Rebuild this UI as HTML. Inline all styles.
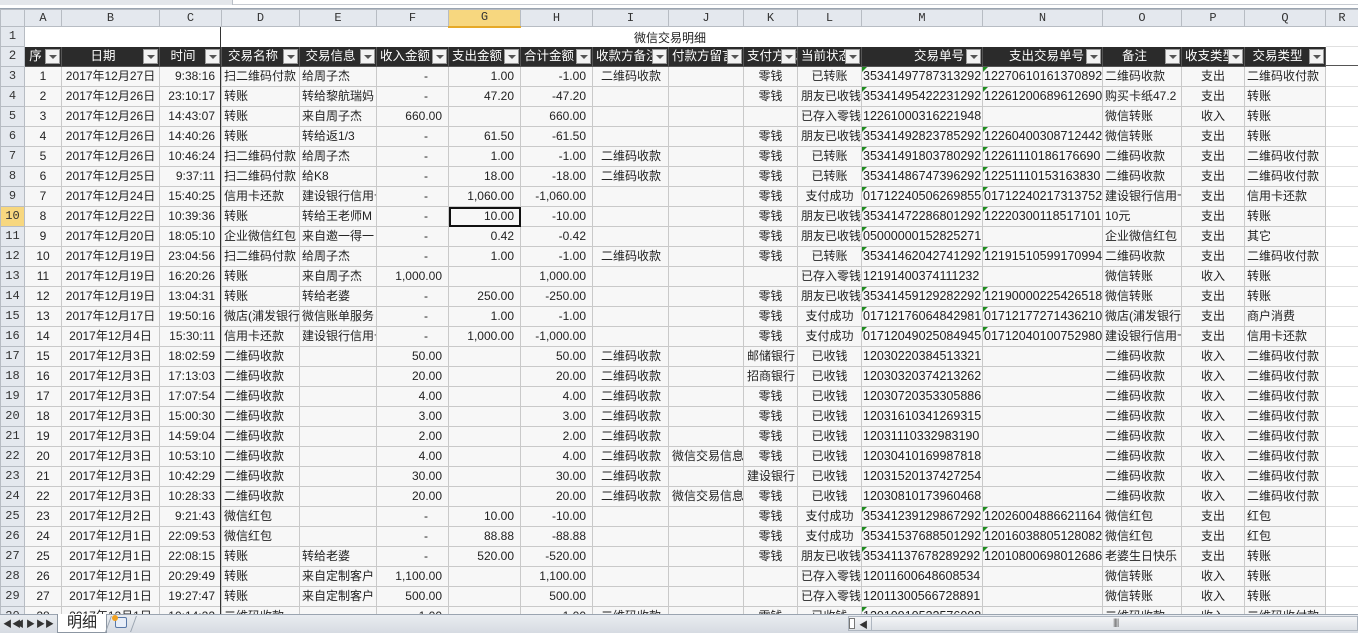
<!DOCTYPE html>
<html><head><meta charset="utf-8">
<style>
*{margin:0;padding:0;box-sizing:border-box}
html{overflow:hidden;height:633px}
body{width:1358px;height:633px;overflow:hidden;background:#fff;position:relative;font-family:"Liberation Sans","Noto Sans CJK SC",sans-serif;font-size:12px;color:#222}
#top{position:absolute;left:0;top:0;width:1358px;height:9px;background:#fff;border-bottom:1px solid #9aa4b0}
#top:before{content:"";position:absolute;left:0;top:4px;width:1358px;height:1px;background:#c8ccd2}
#top:after{content:"";position:absolute;left:0;top:0;width:232px;height:5px;background:#e4e7eb;border-right:1px solid #b8bec6}
table{position:absolute;left:0;top:9px;border-collapse:collapse;table-layout:fixed;width:1358px}
td{height:19px;border:1px solid #c9c9c9;background:#f7f7f7;white-space:nowrap;overflow:hidden;padding:0 3px;line-height:17px;position:relative}
tr.ch td{height:17px;line-height:15px;background:#e4e8ee;border-color:#b7bcc3;text-align:center;font-family:"Liberation Mono",monospace;font-size:12px;color:#333}
tr.ch td.sel{background:#f7d77f;border-bottom:2px solid #e6a928}
td.rn{background:#e4e8ee;border-color:#b7bcc3;text-align:center;padding:0;font-family:"Liberation Mono",monospace;color:#333;font-size:12px;line-height:19px}
td.rn.sel{background:#f7d77f}
tr.r1 td{height:18px;background:#fff;border-color:#fff}
tr.r1 td.rn{background:#e4e8ee;border-color:#b7bcc3}
tr.hd td{background:#2b2b2b;color:#fff;border-color:#555;font-size:12.5px;padding-right:18px;text-align:center}
tr.hd td.rn{background:#e4e8ee;color:#333;border-color:#b7bcc3;padding:0}
tr.hd td b{position:absolute;right:1px;top:2px;width:15px;height:15px;background:#f2f2f2;border:1px solid #999}
tr.hd td b:after{content:"";position:absolute;left:3px;top:5px;border-left:4px solid transparent;border-right:4px solid transparent;border-top:4px solid #555}
tr.d td:nth-child(2),tr.d td:nth-child(3),tr.d td:nth-child(12),tr.d td:nth-child(13),tr.d td:nth-child(17){text-align:center}
tr.d td:nth-child(4),tr.d td:nth-child(7),tr.d td:nth-child(8),tr.d td:nth-child(9){text-align:right;padding-right:6px}
tr.d td:nth-child(5),tr.d td:nth-child(6),tr.d td:nth-child(16),tr.d td:nth-child(18){padding-left:2px}
tr.d td:nth-child(10){padding-left:8px}
tr.d td:nth-child(14),tr.d td:nth-child(15){padding:0 1px;font-size:12.5px}
tr.d td:nth-child(19),tr.r1 td:nth-child(19){background:#fff;border-color:#e0e0e0}
td.dash{padding-right:20px!important}
td.g:before{content:"";position:absolute;left:0;top:0;border-top:5px solid #1f8a1f;border-right:5px solid transparent}
td.cur{outline:2px solid #111;outline-offset:-2px}
#fz{position:absolute;left:220px;top:27px;width:1px;height:590px;background:#333}
#title{position:absolute;left:600px;top:29px;width:140px;text-align:center;font-size:12px}
#hl{position:absolute;left:1325px;top:65px;width:33px;height:1px;background:#555}
#tabs{position:absolute;left:0;top:614px;width:1358px;height:19px;background:linear-gradient(#e9ecf0,#d6dbe2);border-top:1px solid #9aa4b0}
#tabs .nav{position:absolute;top:2px;font-size:9px;color:#333}
#tab{position:absolute;left:57px;top:-1px;width:50px;height:19px;background:#fff;border:1px solid #8c96a2;border-top:none;font-size:15px;text-align:center;line-height:18px}
#newt{position:absolute;left:108px;top:1px;width:26px;height:16px;border-left:1px solid #9aa4b0;transform:skewX(-20deg);border-right:1px solid #9aa4b0}
#hs{position:absolute;left:848px;top:616px;width:510px;height:15px;background:linear-gradient(#f4f5f7,#dde1e6);border:1px solid #aeb6c0}
</style></head><body>
<div id="top"></div>
<table>
<colgroup><col style="width:24px"><col style="width:37px"><col style="width:98px"><col style="width:62px"><col style="width:78px"><col style="width:77px"><col style="width:72px"><col style="width:72px"><col style="width:72px"><col style="width:76px"><col style="width:75px"><col style="width:54px"><col style="width:64px"><col style="width:121px"><col style="width:120px"><col style="width:79px"><col style="width:63px"><col style="width:81px"><col style="width:33px"></colgroup>
<tr class="ch"><td></td><td>A</td><td>B</td><td>C</td><td>D</td><td>E</td><td>F</td><td class="sel">G</td><td>H</td><td>I</td><td>J</td><td>K</td><td>L</td><td>M</td><td>N</td><td>O</td><td>P</td><td>Q</td><td>R</td></tr>
<tr class="r1"><td class="rn">1</td><td></td><td></td><td></td><td></td><td></td><td></td><td></td><td></td><td></td><td></td><td></td><td></td><td></td><td></td><td></td><td></td><td></td><td></td></tr>
<tr class="hd"><td class="rn">2</td><td>序<b></b></td><td>日期<b></b></td><td>时间<b></b></td><td>交易名称<b></b></td><td>交易信息<b></b></td><td>收入金额<b></b></td><td>支出金额<b></b></td><td>合计金额<b></b></td><td>收款方备注<b></b></td><td>付款方留言<b></b></td><td>支付方式<b></b></td><td>当前状态<b></b></td><td style="text-align:right">交易单号<b></b></td><td style="text-align:right">支出交易单号<b></b></td><td>备注<b></b></td><td>收支类型<b></b></td><td>交易类型<b></b></td><td style="background:#fff;border-color:#fff"></td></tr>
<tr class="d"><td class="rn">3</td><td>1</td><td>2017年12月27日</td><td>9:38:16</td><td>扫二维码付款</td><td>给周子杰</td><td class="dash">-</td><td>1.00</td><td>-1.00</td><td>二维码收款</td><td></td><td>零钱</td><td>已转账</td><td class="g">35341497787313292</td><td class="g">12270610161370892</td><td>二维码收款</td><td>支出</td><td>二维码收付款</td><td></td></tr>
<tr class="d"><td class="rn">4</td><td>2</td><td>2017年12月26日</td><td>23:10:17</td><td>转账</td><td>转给黎航瑞妈</td><td class="dash">-</td><td>47.20</td><td>-47.20</td><td></td><td></td><td>零钱</td><td>朋友已收钱</td><td class="g">35341495422231292</td><td class="g">12261200689612690</td><td>购买卡纸47.2</td><td>支出</td><td>转账</td><td></td></tr>
<tr class="d"><td class="rn">5</td><td>3</td><td>2017年12月26日</td><td>14:43:07</td><td>转账</td><td>来自周子杰</td><td>660.00</td><td></td><td>660.00</td><td></td><td></td><td></td><td>已存入零钱</td><td>12261000316221948</td><td></td><td>微信转账</td><td>收入</td><td>转账</td><td></td></tr>
<tr class="d"><td class="rn">6</td><td>4</td><td>2017年12月26日</td><td>14:40:26</td><td>转账</td><td>转给返1/3</td><td class="dash">-</td><td>61.50</td><td>-61.50</td><td></td><td></td><td>零钱</td><td>朋友已收钱</td><td class="g">35341492823785292</td><td class="g">12260400308712442</td><td>微信转账</td><td>支出</td><td>转账</td><td></td></tr>
<tr class="d"><td class="rn">7</td><td>5</td><td>2017年12月26日</td><td>10:46:24</td><td>扫二维码付款</td><td>给周子杰</td><td class="dash">-</td><td>1.00</td><td>-1.00</td><td>二维码收款</td><td></td><td>零钱</td><td>已转账</td><td class="g">35341491803780292</td><td class="g">12261110186176690</td><td>二维码收款</td><td>支出</td><td>二维码收付款</td><td></td></tr>
<tr class="d"><td class="rn">8</td><td>6</td><td>2017年12月25日</td><td>9:37:11</td><td>扫二维码付款</td><td>给K8</td><td class="dash">-</td><td>18.00</td><td>-18.00</td><td>二维码收款</td><td></td><td>零钱</td><td>已转账</td><td class="g">35341486747396292</td><td class="g">12251110153163830</td><td>二维码收款</td><td>支出</td><td>二维码收付款</td><td></td></tr>
<tr class="d"><td class="rn">9</td><td>7</td><td>2017年12月24日</td><td>15:40:25</td><td>信用卡还款</td><td>建设银行信用卡</td><td class="dash">-</td><td>1,060.00</td><td>-1,060.00</td><td></td><td></td><td>零钱</td><td>支付成功</td><td class="g">01712240506269855</td><td class="g">01712240217313752</td><td>建设银行信用卡</td><td>支出</td><td>信用卡还款</td><td></td></tr>
<tr class="d"><td class="rn sel">10</td><td>8</td><td>2017年12月22日</td><td>10:39:36</td><td>转账</td><td>转给王老师M</td><td class="dash">-</td><td class="cur">10.00</td><td>-10.00</td><td></td><td></td><td>零钱</td><td>朋友已收钱</td><td class="g">35341472286801292</td><td class="g">12220300118517101</td><td>10元</td><td>支出</td><td>转账</td><td></td></tr>
<tr class="d"><td class="rn">11</td><td>9</td><td>2017年12月20日</td><td>18:05:10</td><td>企业微信红包</td><td>来自邀一得一</td><td class="dash">-</td><td>0.42</td><td>-0.42</td><td></td><td></td><td>零钱</td><td>朋友已收钱</td><td class="g">05000000152825271</td><td></td><td>企业微信红包</td><td>支出</td><td>其它</td><td></td></tr>
<tr class="d"><td class="rn">12</td><td>10</td><td>2017年12月19日</td><td>23:04:56</td><td>扫二维码付款</td><td>给周子杰</td><td class="dash">-</td><td>1.00</td><td>-1.00</td><td>二维码收款</td><td></td><td>零钱</td><td>已转账</td><td class="g">35341462042741292</td><td class="g">12191510599170994</td><td>二维码收款</td><td>支出</td><td>二维码收付款</td><td></td></tr>
<tr class="d"><td class="rn">13</td><td>11</td><td>2017年12月19日</td><td>16:20:26</td><td>转账</td><td>来自周子杰</td><td>1,000.00</td><td></td><td>1,000.00</td><td></td><td></td><td></td><td>已存入零钱</td><td>12191400374111232</td><td></td><td>微信转账</td><td>收入</td><td>转账</td><td></td></tr>
<tr class="d"><td class="rn">14</td><td>12</td><td>2017年12月19日</td><td>13:04:31</td><td>转账</td><td>转给老婆</td><td class="dash">-</td><td>250.00</td><td>-250.00</td><td></td><td></td><td>零钱</td><td>朋友已收钱</td><td class="g">35341459129282292</td><td class="g">12190000225426518</td><td>微信转账</td><td>支出</td><td>转账</td><td></td></tr>
<tr class="d"><td class="rn">15</td><td>13</td><td>2017年12月17日</td><td>19:50:16</td><td>微店(浦发银行</td><td>微信账单服务</td><td class="dash">-</td><td>1.00</td><td>-1.00</td><td></td><td></td><td>零钱</td><td>支付成功</td><td class="g">01712176064842981</td><td class="g">01712177271436210</td><td>微店(浦发银行</td><td>支出</td><td>商户消费</td><td></td></tr>
<tr class="d"><td class="rn">16</td><td>14</td><td>2017年12月4日</td><td>15:30:11</td><td>信用卡还款</td><td>建设银行信用卡</td><td class="dash">-</td><td>1,000.00</td><td>-1,000.00</td><td></td><td></td><td>零钱</td><td>支付成功</td><td class="g">01712049025084945</td><td class="g">01712040100752980</td><td>建设银行信用卡</td><td>支出</td><td>信用卡还款</td><td></td></tr>
<tr class="d"><td class="rn">17</td><td>15</td><td>2017年12月3日</td><td>18:02:59</td><td>二维码收款</td><td></td><td>50.00</td><td></td><td>50.00</td><td>二维码收款</td><td></td><td>邮储银行</td><td>已收钱</td><td>12030220384513321</td><td></td><td>二维码收款</td><td>收入</td><td>二维码收付款</td><td></td></tr>
<tr class="d"><td class="rn">18</td><td>16</td><td>2017年12月3日</td><td>17:13:03</td><td>二维码收款</td><td></td><td>20.00</td><td></td><td>20.00</td><td>二维码收款</td><td></td><td>招商银行</td><td>已收钱</td><td>12030320374213262</td><td></td><td>二维码收款</td><td>收入</td><td>二维码收付款</td><td></td></tr>
<tr class="d"><td class="rn">19</td><td>17</td><td>2017年12月3日</td><td>17:07:54</td><td>二维码收款</td><td></td><td>4.00</td><td></td><td>4.00</td><td>二维码收款</td><td></td><td>零钱</td><td>已收钱</td><td>12030720353305886</td><td></td><td>二维码收款</td><td>收入</td><td>二维码收付款</td><td></td></tr>
<tr class="d"><td class="rn">20</td><td>18</td><td>2017年12月3日</td><td>15:00:30</td><td>二维码收款</td><td></td><td>3.00</td><td></td><td>3.00</td><td>二维码收款</td><td></td><td>零钱</td><td>已收钱</td><td>12031610341269315</td><td></td><td>二维码收款</td><td>收入</td><td>二维码收付款</td><td></td></tr>
<tr class="d"><td class="rn">21</td><td>19</td><td>2017年12月3日</td><td>14:59:04</td><td>二维码收款</td><td></td><td>2.00</td><td></td><td>2.00</td><td>二维码收款</td><td></td><td>零钱</td><td>已收钱</td><td>12031110332983190</td><td></td><td>二维码收款</td><td>收入</td><td>二维码收付款</td><td></td></tr>
<tr class="d"><td class="rn">22</td><td>20</td><td>2017年12月3日</td><td>10:53:10</td><td>二维码收款</td><td></td><td>4.00</td><td></td><td>4.00</td><td>二维码收款</td><td>微信交易信息</td><td>零钱</td><td>已收钱</td><td>12030410169987818</td><td></td><td>二维码收款</td><td>收入</td><td>二维码收付款</td><td></td></tr>
<tr class="d"><td class="rn">23</td><td>21</td><td>2017年12月3日</td><td>10:42:29</td><td>二维码收款</td><td></td><td>30.00</td><td></td><td>30.00</td><td>二维码收款</td><td></td><td>建设银行</td><td>已收钱</td><td>12031520137427254</td><td></td><td>二维码收款</td><td>收入</td><td>二维码收付款</td><td></td></tr>
<tr class="d"><td class="rn">24</td><td>22</td><td>2017年12月3日</td><td>10:28:33</td><td>二维码收款</td><td></td><td>20.00</td><td></td><td>20.00</td><td>二维码收款</td><td>微信交易信息</td><td>零钱</td><td>已收钱</td><td>12030810173960468</td><td></td><td>二维码收款</td><td>收入</td><td>二维码收付款</td><td></td></tr>
<tr class="d"><td class="rn">25</td><td>23</td><td>2017年12月2日</td><td>9:21:43</td><td>微信红包</td><td></td><td class="dash">-</td><td>10.00</td><td>-10.00</td><td></td><td></td><td>零钱</td><td>支付成功</td><td class="g">35341239129867292</td><td class="g">12026004886621164</td><td>微信红包</td><td>支出</td><td>红包</td><td></td></tr>
<tr class="d"><td class="rn">26</td><td>24</td><td>2017年12月1日</td><td>22:09:53</td><td>微信红包</td><td></td><td class="dash">-</td><td>88.88</td><td>-88.88</td><td></td><td></td><td>零钱</td><td>支付成功</td><td class="g">35341537688501292</td><td class="g">12016038805128082</td><td>微信红包</td><td>支出</td><td>红包</td><td></td></tr>
<tr class="d"><td class="rn">27</td><td>25</td><td>2017年12月1日</td><td>22:08:15</td><td>转账</td><td>转给老婆</td><td class="dash">-</td><td>520.00</td><td>-520.00</td><td></td><td></td><td>零钱</td><td>朋友已收钱</td><td class="g">35341137678289292</td><td class="g">12010800698012686</td><td>老婆生日快乐</td><td>支出</td><td>转账</td><td></td></tr>
<tr class="d"><td class="rn">28</td><td>26</td><td>2017年12月1日</td><td>20:29:49</td><td>转账</td><td>来自定制客户</td><td>1,100.00</td><td></td><td>1,100.00</td><td></td><td></td><td></td><td>已存入零钱</td><td>12011600648608534</td><td></td><td>微信转账</td><td>收入</td><td>转账</td><td></td></tr>
<tr class="d"><td class="rn">29</td><td>27</td><td>2017年12月1日</td><td>19:27:47</td><td>转账</td><td>来自定制客户</td><td>500.00</td><td></td><td>500.00</td><td></td><td></td><td></td><td>已存入零钱</td><td>12011300566728891</td><td></td><td>微信转账</td><td>收入</td><td>转账</td><td></td></tr>
<tr class="d"><td class="rn">30</td><td>28</td><td>2017年12月1日</td><td>10:14:22</td><td>二维码收款</td><td></td><td>1.00</td><td></td><td>1.00</td><td>二维码收款</td><td></td><td>零钱</td><td>已收钱</td><td class="g">12010910532576008</td><td></td><td>二维码收款</td><td>收入</td><td>二维码收付款</td><td></td></tr>
</table>
<div id="fz"></div>
<div id="hl"></div>
<div id="title">微信交易明细</div>
<div id="tabs">
<span class="nav" style="left:3px">&#9664;&#9664;</span>
<span class="nav" style="left:15px">&#9664;</span>
<span class="nav" style="left:26px">&#9654;</span>
<span class="nav" style="left:36px">&#9654;&#9654;</span>
<div id="tab">明细</div>
<div id="newt"></div>
<span style="position:absolute;left:115px;top:2px;width:12px;height:11px;border:1px solid #5878a8;background:#e8eef8;border-radius:2px"></span>
<span style="position:absolute;left:112px;top:0;width:6px;height:6px;background:#f0a020;border-radius:50%"></span>
</div>
<div id="hs">
<span style="position:absolute;left:0;top:1px;width:6px;height:11px;border:1px solid #777;background:#fff"></span>
<span style="position:absolute;left:10px;top:1px;font-size:9px;color:#333">&#9664;</span>
<span style="position:absolute;left:22px;top:-1px;width:1px;height:15px;background:#aeb6c0"></span>
<span style="position:absolute;left:264px;top:0;font-size:9px;color:#666;letter-spacing:-1px">||||</span>
</div>
</body></html>
